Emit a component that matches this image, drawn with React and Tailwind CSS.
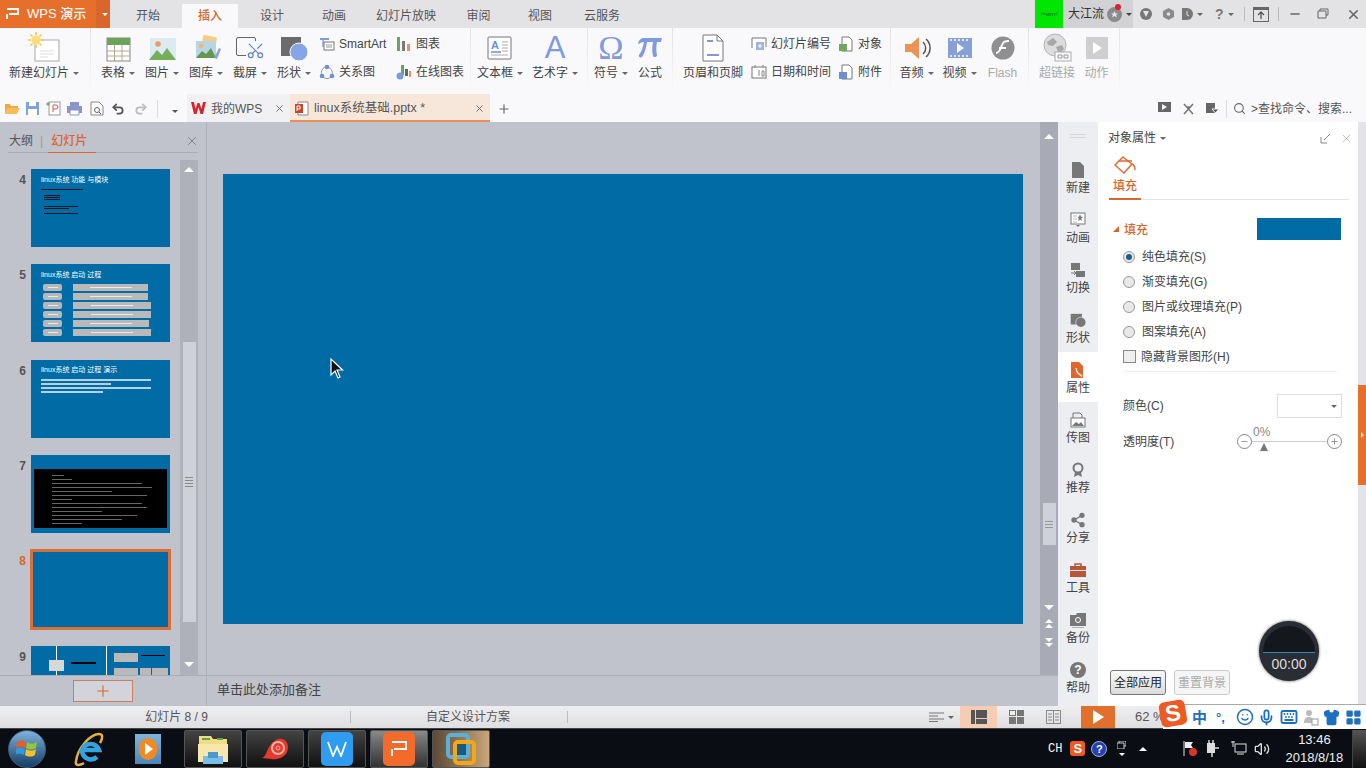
import React from "react";
import { Scissors, Search, Plus, X, Minus, Share2, Undo2, Redo2, Smile, Mic, Keyboard, Shirt, LayoutGrid, Volume2 } from "lucide-react";

const FONT = "font-['Liberation_Sans','Noto_Sans_CJK_SC',sans-serif]";

const Caret = ({ color = "border-t-[#666]" }) => (
  <span className={`inline-block ml-[4px] w-0 h-0 border-x-[3px] border-x-transparent border-t-[3px] ${color}`} />
);

const Sep = () => <div className="w-px h-[66px] bg-gradient-to-b from-[#e2e3e6] to-[#f9f9fb] shrink-0" />;
const Gap = ({ w }) => <div className={`${w} shrink-0`} />;

/* ---------- ribbon icons ---------- */
const NewSlideIcon = () => (
  <svg width="32" height="32" viewBox="0 0 32 32">
    <rect x="7" y="8" width="24" height="21" fill="#fff" stroke="#a9a9a9" />
    <path d="M12 19h14M12 22h14M12 25h8" stroke="#ddd" />
    <circle cx="8" cy="8" r="4.500" fill="#fbdc7a" />
    <path d="M8 0v3M8 13v3M0 8h3M13 8h3M2.500 2.500l2 2M11.500 11.500l2 2M13.500 2.500l-2 2M4.500 11.500l-2 2" stroke="#f0c644" strokeWidth="1.500" />
  </svg>
);
const TableIcon = () => (
  <svg width="32" height="32" viewBox="0 0 32 32">
    <rect x="5" y="6" width="23" height="23" fill="#fff" stroke="#888" />
    <rect x="5" y="6" width="23" height="7" fill="#6ca25a" />
    <path d="M5 19h23M5 24h23M12.500 13v16M20 13v16" stroke="#b9a48e" />
  </svg>
);
const PictureIcon = () => (
  <svg width="32" height="32" viewBox="0 0 32 32">
    <rect x="4" y="6" width="26" height="22" fill="#dceaf2" />
    <circle cx="12" cy="12" r="2.800" fill="#f09a56" />
    <path d="M3 28l8-10 5 5 5-7 9 12z" fill="#76ae5a" />
  </svg>
);
const GalleryIcon = () => (
  <svg width="32" height="32" viewBox="0 0 32 32">
    <rect x="12" y="4" width="14" height="14" rx="1" fill="#f2cf80" transform="rotate(10 19 11)" />
    <rect x="6" y="9" width="20" height="17" fill="#b8d5e8" />
    <circle cx="11" cy="14" r="2.200" fill="#f2b95e" />
    <path d="M6 26l6-7 4 3 5-6 5 10z" fill="#63984e" />
    <path d="M24 26l5-10 2 1-4 10z" fill="#8b9fd8" />
  </svg>
);
const ScreenshotIcon = () => (
  <div className="relative w-[32px] h-[32px]">
    <div className="absolute left-[2px] top-[5px] w-[20px] h-[19px] border border-[#666] rounded-[2px]" />
    <Scissors size={19} className="absolute left-[12px] top-[9px] text-[#5f82c9] rotate-[-90deg] bg-[#f9f9fb]" strokeWidth={1.500} />
  </div>
);
const ShapesIcon = ({ a = "#6b6b6b", b = "#86a5e6", s = 32 }) => (
  <svg width={s} height={s} viewBox="0 0 32 32">
    <path d="M3 5h20v19H3z" fill={a} />
    <circle cx="21" cy="20" r="9" fill={b} stroke="#f9f9fb" />
  </svg>
);
const TextBoxIcon = () => (
  <svg width="32" height="32" viewBox="0 0 32 32">
    <rect x="4" y="5" width="23" height="22" rx="1" fill="#fff" stroke="#777" />
    <text x="7" y="17" fontSize="11" fontWeight="700" fill="#6c8fd6" fontFamily="Liberation Sans">A</text>
    <path d="M7 20h10" stroke="#6c8fd6" strokeWidth="1.500" />
    <path d="M18 10h6M18 13h6M18 16h6M18 19h6M7 23h17" stroke="#aaa" />
  </svg>
);
const PiIcon = () => (
  <svg width="26" height="26" viewBox="0 0 26 26">
    <path d="M1 8c1-3 3-5 6-5h18l-1 4h-4c-1 5-1 9 0 13 .3 2-3 3-4 1-1-4-1-9 0-14h-6c-1 6-2 11-5 15-1 1-4 0-3-2 3-4 4-8 5-13-3 0-4 1-5 2z" fill="#7f9ae0" />
  </svg>
);
const PageFootIcon = () => (
  <svg width="32" height="32" viewBox="0 0 32 32">
    <path d="M6 3h14l6 6v20H6z" fill="#fff" stroke="#777" />
    <path d="M20 3v6h6" fill="none" stroke="#777" />
    <path d="M10 9h6M10 23h12" stroke="#7f9ad8" strokeWidth="2" />
  </svg>
);
const SpeakerIcon = () => (
  <svg width="32" height="32" viewBox="0 0 32 32">
    <path d="M4 12h6l8-7v22l-8-7H4z" fill="#ef9055" />
    <path d="M22 10a8 8 0 010 12M25 7a12 12 0 010 18" fill="none" stroke="#555" strokeWidth="1.500" />
  </svg>
);
const VideoIcon = () => (
  <svg width="32" height="32" viewBox="0 0 32 32">
    <rect x="4" y="6" width="24" height="20" fill="#86a0d8" />
    <path d="M6 8h2M10 8h2M14 8h2M18 8h2M22 8h2M6 24h2M10 24h2M14 24h2M18 24h2M22 24h2" stroke="#fff" strokeWidth="1.500" />
    <path d="M13 11l7 5-7 5z" fill="#fff" />
  </svg>
);
const FlashIcon = () => (
  <svg width="32" height="32" viewBox="0 0 32 32">
    <circle cx="16" cy="16" r="11.500" fill="#8f8f8f" />
    <path d="M9 21c5 0 5-9 8-11 1-.7 3-1 5-1M12 16h7" fill="none" stroke="#fff" strokeWidth="2" />
  </svg>
);
const LinkIcon = () => (
  <svg width="32" height="32" viewBox="0 0 32 32">
    <circle cx="14" cy="13" r="11" fill="#dcdcdc" stroke="#b5b5b5" />
    <path d="M6 10l6-4 4 4-4 4-5-1zM15 15l6-2 2 4-5 5z" fill="#a8a8a8" />
    <rect x="14" y="20" width="16" height="9" fill="#f9f9fb" stroke="#aaa" />
    <path d="M17 23h4v3h-4zM23 23h4v3h-4z" fill="none" stroke="#999" />
  </svg>
);
const ActionIcon = () => (
  <svg width="32" height="32" viewBox="0 0 32 32">
    <rect x="5" y="5" width="22" height="22" fill="#cfcfcf" />
    <path d="M12 10l9 6-9 6z" fill="#fff" />
  </svg>
);

const MiniPage = ({ fill = "#fff" }) => (
  <svg width="16" height="16" viewBox="0 0 16 16">
    <path d="M4 1h7l3 3v11H4z" fill="#fff" stroke="#777" />
    <rect x="1" y="8" width="8" height="7" fill={fill} />
  </svg>
);

const smallIcons = {
  smartart: (
    <svg width="16" height="16" viewBox="0 0 16 16">
      <path d="M1 2h9v2H1z" fill="#7f9ad8" />
      <path d="M3 4h2v7H3z" fill="#a7bce6" />
      <rect x="5" y="6" width="10" height="8" fill="#fff" stroke="#777" />
      <path d="M7 9h6M7 11h6" stroke="#999" />
    </svg>
  ),
  chart: (
    <svg width="16" height="16" viewBox="0 0 16 16">
      <path d="M1 1h3v14H1z" fill="#6ca25a" />
      <path d="M6 5h3v10H6z" fill="#7a7a7a" />
      <path d="M11 8h3v7h-3z" fill="#ef9055" />
    </svg>
  ),
  relation: (
    <svg width="16" height="16" viewBox="0 0 16 16">
      <path d="M8 3a6 6 0 015 8M3 11a6 6 0 013-8M12 13a6 6 0 01-8 0" fill="none" stroke="#999" />
      <circle cx="8" cy="3" r="2.300" fill="#6c8fd6" />
      <circle cx="3" cy="12" r="2.300" fill="#6c8fd6" />
      <circle cx="13" cy="12" r="2.300" fill="#6c8fd6" />
    </svg>
  ),
  online: (
    <svg width="16" height="16" viewBox="0 0 16 16">
      <path d="M5 1h3v10H5z" fill="#6ca25a" />
      <path d="M9 5h3v7H9z" fill="#666" />
      <path d="M13 7h2v6h-2z" fill="#ef9055" />
      <circle cx="4" cy="12" r="3.500" fill="#7f9ad8" />
    </svg>
  ),
  number: (
    <svg width="16" height="16" viewBox="0 0 16 16">
      <path d="M1 12V2h14v9" fill="#fff" stroke="#777" />
      <rect x="5" y="6" width="8" height="8" fill="#9fb4e2" />
      <path d="M7 10h4M9 8v4" stroke="#fff" />
    </svg>
  ),
  date: (
    <svg width="16" height="16" viewBox="0 0 16 16">
      <rect x="1" y="3" width="14" height="11" fill="#fff" stroke="#777" />
      <path d="M4 1v3M12 1v3M8 6v6M11 7h2v5h-2z" fill="none" stroke="#888" />
    </svg>
  ),
  object: <MiniPage fill="#6fa85e" />,
  attach: <MiniPage fill="#6c8fd6" />,
};

const BigBtn = ({ w, icon, label, caret, dim }) => (
  <div className={`flex flex-col items-center shrink-0 ${w}`}>
    <div className="h-[32px] mt-[4px] flex items-center justify-center">{icon}</div>
    <div className={`mt-px flex items-center whitespace-nowrap text-[12px] leading-[16px] ${dim ? "text-[#a9a9a9]" : "text-[#444]"}`}>
      {label}
      {caret && <Caret />}
    </div>
  </div>
);

const SmallCol = ({ w, items }) => (
  <div className={`flex flex-col shrink-0 gap-[9px] pt-[6px] ${w}`}>
    {items.map((it) => (
      <div key={it.label} className="flex items-center gap-[4px] h-[19px] text-[12px] text-[#444] whitespace-nowrap">
        {smallIcons[it.icon]}
        <span>{it.label}</span>
      </div>
    ))}
  </div>
);

const Ribbon = () => (
  <div className="flex h-[66px] bg-[#f9f9fb]">
    <BigBtn w="w-[90px] pr-[2px]" icon={<NewSlideIcon />} label="新建幻灯片" caret />
    <Sep />
    <Gap w="w-[5px]" />
    <BigBtn w="w-[44px]" icon={<TableIcon />} label="表格" caret />
    <BigBtn w="w-[44px]" icon={<PictureIcon />} label="图片" caret />
    <BigBtn w="w-[44px]" icon={<GalleryIcon />} label="图库" caret />
    <BigBtn w="w-[44px]" icon={<ScreenshotIcon />} label="截屏" caret />
    <BigBtn w="w-[44px]" icon={<ShapesIcon />} label="形状" caret />
    <Gap w="w-[3px]" />
    <SmallCol w="w-[77px]" items={[{ icon: "smartart", label: "SmartArt" }, { icon: "relation", label: "关系图" }]} />
    <SmallCol w="w-[74px]" items={[{ icon: "chart", label: "图表" }, { icon: "online", label: "在线图表" }]} />
    <Sep />
    <Gap w="w-[2px]" />
    <BigBtn w="w-[54px]" icon={<TextBoxIcon />} label="文本框" caret />
    <BigBtn w="w-[56px]" icon={<span className="text-[31px] leading-[32px] text-[#7f9ae0] font-['Liberation_Sans']">A</span>} label="艺术字" caret />
    <Gap w="w-[4px]" />
    <Sep />
    <BigBtn w="w-[46px]" icon={<span className="text-[34px] leading-[32px] text-[#7f9ae0] font-['Liberation_Serif']">Ω</span>} label="符号" caret />
    <Gap w="w-[4px]" />
    <BigBtn w="w-[24px]" icon={<PiIcon />} label="公式" />
    <Gap w="w-[10px]" />
    <Sep />
    <Gap w="w-[6px]" />
    <BigBtn w="w-[68px]" icon={<PageFootIcon />} label="页眉和页脚" />
    <Gap w="w-[4px]" />
    <SmallCol w="w-[87px]" items={[{ icon: "number", label: "幻灯片编号" }, { icon: "date", label: "日期和时间" }]} />
    <SmallCol w="w-[52px]" items={[{ icon: "object", label: "对象" }, { icon: "attach", label: "附件" }]} />
    <Sep />
    <Gap w="w-[4px]" />
    <BigBtn w="w-[43px]" icon={<SpeakerIcon />} label="音频" caret />
    <BigBtn w="w-[43px]" icon={<VideoIcon />} label="视频" caret />
    <BigBtn w="w-[43px]" icon={<FlashIcon />} label="Flash" dim />
    <Gap w="w-[4px]" />
    <Sep />
    <Gap w="w-[7px]" />
    <BigBtn w="w-[42px]" icon={<LinkIcon />} label="超链接" dim />
    <BigBtn w="w-[37px]" icon={<ActionIcon />} label="动作" dim />
    <Gap w="w-[4px]" />
    <Sep />
  </div>
);

const tabs = [
  { t: "开始", w: "w-[72px] pl-[4px]" },
  { t: "插入", w: "w-[56px]", active: true },
  { t: "设计", w: "w-[68px]" },
  { t: "动画", w: "w-[56px]" },
  { t: "幻灯片放映", w: "w-[88px]" },
  { t: "审阅", w: "w-[57px]" },
  { t: "视图", w: "w-[66px]" },
  { t: "云服务", w: "w-[58px]" },
];

const TitleBar = () => (
  <div className="flex h-[28px] bg-[#e3e3e5] items-stretch">
    <div className="flex w-[110px] bg-[#e56f2b] text-white text-[13px] font-medium shrink-0">
      <div className="flex items-center w-[96px] pl-[6px] gap-[7px]">
        <svg width="14" height="12" viewBox="0 0 14 12"><path d="M1 1h11v5H3M1 6v5" fill="none" stroke="#fff" strokeWidth="1.800" /></svg>
        <span className="whitespace-nowrap">WPS 演示</span>
      </div>
      <div className="flex-1 bg-[#d9662a] flex items-center justify-center"><Caret color="border-t-white" /></div>
    </div>
    {tabs.map((t) => (
      <div
        key={t.t}
        className={`${t.w} h-[24px] mt-[4px] flex items-center justify-center text-[12px] shrink-0 ${t.active ? "bg-[#f9f9fb] text-[#d9662a] font-medium" : "text-[#555]"}`}
      >
        {t.t}
      </div>
    ))}
    <div className="flex-1" />
    <div className="w-[28px] bg-[#00e600] shrink-0 flex items-center justify-center text-[6px] italic text-[#063]">f=wm²</div>
    <div className="w-[70px] bg-[#d2d2d4] flex items-center pl-[5px] text-[12px] text-[#333] shrink-0 relative">
      大江流
      <svg className="ml-[3px]" width="15" height="15" viewBox="0 0 15 15"><circle cx="7.500" cy="7.500" r="7.500" fill="#8a8a8a" /><path d="M7.500 4l1 2.500h2.500l-2 1.500 1 2.500-2.500-1.500L5 10.500l1-2.500-2-1.500h2.500z" fill="#e8e8e8" /></svg>
      <div className="absolute left-[52px] top-[4px] w-[6px] h-[6px] rounded-full bg-[#d9222a]" />
      <Caret color="border-t-[#444]" />
    </div>
    <div className="w-[233px] flex items-center text-[#777] shrink-0">
      <svg className="ml-[7px]" width="12" height="12" viewBox="0 0 12 12"><circle cx="6" cy="6" r="6" fill="#777" /><path d="M3 3l3 6 3-6z" fill="#e3e3e5" /></svg>
      <svg className="ml-[11px]" width="11" height="12" viewBox="0 0 11 12"><path d="M5.500 0L11 3v6l-5.500 3L0 9V3z" fill="#8a8a8a" /><circle cx="5.500" cy="6" r="1.800" fill="#e3e3e5" /></svg>
      <svg className="ml-[8px]" width="11" height="12" viewBox="0 0 11 12"><path d="M0 0h5a6 6 0 010 12H0z" fill="#777" /><path d="M5 3v4l2 1" fill="none" stroke="#e3e3e5" /></svg>
      <Caret />
      <span className="ml-[12px] text-[14px] font-bold leading-none">?</span>
      <Caret />
      <div className="ml-[10px] w-px h-[14px] bg-[#bbb]" />
      <svg className="ml-[8px]" width="16" height="15" viewBox="0 0 16 15"><rect x=".5" y=".5" width="15" height="14" fill="none" stroke="#666" /><path d="M1 1h14v2H1z" fill="#666" /><path d="M8 12V6M5 8l3-3 3 3" fill="none" stroke="#555" strokeWidth="1.300" /></svg>
      <div className="ml-[9px] w-px h-[14px] bg-[#bbb]" />
      <Minus size={14} className="ml-[9px] text-[#666]" strokeWidth={2.500} />
      <svg className="ml-[15px]" width="12" height="12" viewBox="0 0 12 12"><path d="M3 3V1h8v6H9M1 3h8v7H1z" fill="none" stroke="#666" /></svg>
      <X size={15} className="ml-[17px] text-[#666]" strokeWidth={2.500} />
    </div>
  </div>
);

const TabBar = () => (
  <div className="flex items-stretch h-[28px] bg-[#f9f9fb] text-[12px] text-[#555]">
    <div className="flex items-center w-[187px] pl-[5px] pt-px shrink-0">
      <svg width="15" height="13" viewBox="0 0 15 13"><path d="M0 2h5l1 2h7v2H3L0 12z" fill="#f2a93c" /><path d="M3 6h12l-3 6H0z" fill="#f5bd5e" /></svg>
      <svg className="ml-[5px]" width="15" height="15" viewBox="0 0 15 15"><path d="M1 1h13v13H1z" fill="#7fa3e0" /><path d="M4 1h7v4H4zM3 8h9v6H3z" fill="#fff" /></svg>
      <svg className="ml-[6px]" width="15" height="15" viewBox="0 0 15 15"><rect x="3" y="1" width="11" height="13" fill="#fff" stroke="#999" /><path d="M7 11V4h3a2 2 0 010 4H7" fill="none" stroke="#d9555a" /><path d="M0 3h4M2 1v4" stroke="#5aa35a" /></svg>
      <svg className="ml-[6px]" width="15" height="15" viewBox="0 0 15 15"><path d="M3 1h9v4H3zM0 5h15v7H0z" fill="#8b95c9" /><path d="M3 9h9v5H3z" fill="#fff" stroke="#8b95c9" /></svg>
      <svg className="ml-[8px]" width="14" height="15" viewBox="0 0 14 15"><path d="M1 1h8l4 4v9H1z" fill="#fff" stroke="#888" /><circle cx="7" cy="9" r="2.500" fill="none" stroke="#666" /><path d="M9 11l2 2" stroke="#666" /></svg>
      <Undo2 size={14} className="ml-[7px] text-[#555]" strokeWidth={3} />
      <Redo2 size={14} className="ml-[9px] text-[#bbb]" strokeWidth={3} />
      <div className="ml-[9px] w-px h-[18px] bg-[#ddd]" />
      <span className="ml-[10px]"><Caret color="border-t-[#555]" /></span>
    </div>
    <div className="flex items-center w-[103px] bg-[#f1f1f3] pl-[4px] pt-px shrink-0">
      <svg className="mr-[5px]" width="15" height="13" viewBox="0 0 15 13"><path d="M0 0l3 12h2.500L7.500 5l2 7H12L15 0h-3l-1.500 7L8.500 1h-2L4.500 7 3 0z" fill="#d9222a" /></svg>
      我的WPS
      <X size={11} className="ml-auto mr-[5px] text-[#666]" />
    </div>
    <div className="flex items-center w-[200px] bg-[#f6e7da] border-b-2 border-[#e9905a] pl-[5px] pt-[3px] shrink-0">
      <svg width="14" height="15" viewBox="0 0 14 15"><path d="M3 1h10v13H3z" fill="#fff" stroke="#888" /><rect x="0" y="3" width="8" height="9" fill="#c8452d" /><path d="M2 10V5h3v3H2" fill="none" stroke="#fff" /></svg>
      <span className="ml-[5px] text-[12.500px]">linux系统基础.pptx *</span>
      <X size={11} className="ml-auto mr-[5px] text-[#666]" />
    </div>
    <div className="flex items-center ml-[7px] pt-px"><Plus size={14} className="text-[#666]" strokeWidth={2} /></div>
    <div className="flex-1" />
    <div className="flex items-center w-[208px] pt-px shrink-0 text-[#555]">
      <svg width="13" height="13" viewBox="0 0 13 13"><path d="M0 0h13v10H0z" fill="#666" /><path d="M4 2l5 3-5 3zM3 11h7v2H3z" fill="#f9f9fb" /></svg>
      <svg className="ml-[11px]" width="13" height="13" viewBox="0 0 13 13"><path d="M2 2l9 10M11 2L2 12M4 5h5" stroke="#777" strokeWidth="1.600" /></svg>
      <svg className="ml-[11px]" width="13" height="13" viewBox="0 0 13 13"><path d="M0 1h9v10H0z" fill="#666" /><path d="M6 7h7l-3.500 4z" fill="#555" stroke="#f9f9fb" /></svg>
      <div className="ml-[7px] w-px h-[18px] bg-[#ddd]" />
      <Search size={13} className="ml-[6px] text-[#666]" />
      <span className="ml-[5px] whitespace-nowrap">&gt;查找命令、搜索...</span>
    </div>
  </div>
);

/* ---------- slide thumbnails ---------- */
const TinyLines = ({ rows }) => (
  <div className="flex flex-col gap-[1px]">
    {rows.map((w, i) => (
      <div key={i} className="h-px bg-black/80" style={{ width: w }} />
    ))}
  </div>
);

const Slide4 = () => (
  <div className="px-[10px] pt-[6px]">
    <div className="text-[7px] leading-[9px] text-white whitespace-nowrap">linux系统 功能 与模块</div>
    <div className="mt-[5px]"><TinyLines rows={[42]} /></div>
    <div className="mt-[5px] ml-[3px]"><TinyLines rows={[16, 16, 16]} /></div>
    <div className="mt-[6px] ml-[3px]"><TinyLines rows={[34, 25]} /></div>
    <div className="mt-[4px] ml-[3px]"><TinyLines rows={[34]} /></div>
  </div>
);

const bars = [75, 75, 78, 78, 76, 78];
const Slide5 = () => (
  <div className="px-[10px] pt-[6px]">
    <div className="text-[7px] leading-[9px] text-white whitespace-nowrap">linux系统 启动 过程</div>
    <div className="flex flex-col gap-[2px] mt-[5px] ml-[2px]">
      {bars.map((w, i) => (
        <div key={i} className="flex h-[7px] gap-[11px]">
          <div className="w-[19px] bg-[#b5b7ba] rounded-[2px] flex items-center justify-center"><div className="w-[10px] h-px bg-white/70" /></div>
          <div className="bg-[#b9b9b9] flex items-center justify-center" style={{ width: w }}><div className="w-[42px] h-px bg-white/70" /></div>
        </div>
      ))}
    </div>
  </div>
);

const Slide6 = () => (
  <div className="px-[10px] pt-[5px]">
    <div className="text-[7px] leading-[9px] text-white whitespace-nowrap">linux系统 启动 过程 演示</div>
    <div className="mt-[5px] flex flex-col gap-[2px]">
      {[110, 70, 110, 62].map((w, i) => (
        <div key={i} className="h-[2px] bg-white/70" style={{ width: w }} />
      ))}
    </div>
  </div>
);

const Slide7 = () => (
  <div className="px-[3px] pt-[14px]">
    <div className="h-[59px] bg-black pl-[18px] pt-[6px] flex flex-col gap-[3px]">
      {[12, 20, 90, 100, 60, 95, 20, 90, 95, 50, 85, 70, 30].map((w, i) => (
        <div key={i} className="h-px bg-white/40" style={{ width: w }} />
      ))}
    </div>
  </div>
);

const Slide9 = () => (
  <div className="relative h-full">
    <div className="absolute left-[25px] top-0 w-px h-[29px] bg-white" />
    <div className="absolute left-[18px] top-[14px] w-[15px] h-[11px] bg-[#d8d8d8]" />
    <div className="absolute left-[40px] top-[16px] w-[25px] h-[2px] bg-black" />
    <div className="absolute left-[75px] top-0 w-px h-[29px] bg-white" />
    <div className="absolute left-[83px] top-[7px] w-[24px] h-[9px] bg-[#b9b9b9]" />
    <div className="absolute left-[83px] top-[22px] w-[24px] h-[7px] bg-[#b9b9b9]" />
    <div className="absolute left-[110px] top-[9px] w-[24px] h-px bg-black" />
    <div className="absolute left-[109px] top-[22px] w-[11px] h-[7px] bg-[#b9b9b9]" />
    <div className="absolute left-[121px] top-[22px] w-[16px] h-[7px] bg-[#b9b9b9]" />
  </div>
);

const thumbs = [
  { n: 4, body: <Slide4 /> },
  { n: 5, body: <Slide5 /> },
  { n: 6, body: <Slide6 />, nudge: true },
  { n: 7, body: <Slide7 /> },
  { n: 8, active: true },
  { n: 9, body: <Slide9 />, nudge: true },
];

const UpTri = () => <div className="w-0 h-0 border-x-[5px] border-x-transparent border-b-[5px] border-b-white" />;
const DownTri = () => <div className="w-0 h-0 border-x-[5px] border-x-transparent border-t-[5px] border-t-white" />;

const Grip = ({ n = 4, c = "bg-[#8a8a8a]" }) => (
  <div className="flex flex-col gap-[2px]">
    {Array.from({ length: n }).map((_, i) => (
      <div key={i} className={`w-[8px] h-px ${c}`} />
    ))}
  </div>
);

const LeftPanel = () => (
  <div className="w-[207px] shrink-0 border-r border-[#aeb0ba] flex flex-col">
    <div className="h-[31px] pt-[8px] mx-[8px] border-b border-[#a9abb5] flex items-center text-[12px] text-[#555] relative shrink-0">
      <span className="ml-px">大纲</span>
      <span className="ml-[7px] mr-[8px] text-[#999]">|</span>
      <span className="text-[#d9662a] font-medium">幻灯片</span>
      <div className="absolute left-[40px] bottom-[-1px] w-[48px] h-px bg-[#d9662a]" />
      <X size={14} strokeWidth={1} className="ml-auto mr-[-1px] text-[#555]" />
    </div>
    <div className="flex flex-1 min-h-0 pt-[7px]">
      <div className="w-[180px] overflow-hidden flex flex-col gap-[17px] pt-[9px] shrink-0 border-b border-[#a9abb5]">
        {thumbs.map((s) => (
          <div key={s.n} className={`flex shrink-0 ${s.nudge ? "mt-px" : ""}`}>
            <div className={`w-[31px] pr-[5px] pt-[4px] text-right text-[12px] leading-[14px] font-bold ${s.active ? "text-[#d9662a]" : "text-[#555]"}`}>{s.n}</div>
            {s.active ? (
              <div className="w-[141px] h-[81px] -ml-px -mt-px -mb-[2px] bg-[#006ba4] border-[3px] border-[#d9703a]" />
            ) : (
              <div className="w-[139px] h-[78px] bg-[#006ba4] overflow-hidden">{s.body}</div>
            )}
          </div>
        ))}
      </div>
      <div className="w-[18px] shrink-0 bg-[#aeb0ba] flex flex-col items-center border-b border-[#a9abb5]">
        <div className="mt-[7px]"><UpTri /></div>
        <div className="mt-[170px] w-[13px] h-[280px] bg-[#cfd1da] flex items-center justify-center"><Grip /></div>
        <div className="mt-[40px]"><DownTri /></div>
      </div>
      <div className="w-[8px] shrink-0 border-b border-[#a9abb5]" />
    </div>
    <div className="h-[30px] shrink-0 flex justify-center">
      <div className="mt-[4px] w-[60px] h-[22px] border border-[#c8815a] bg-[#d3d4db] flex items-center justify-center">
        <Plus size={18} className="text-[#d9662a]" strokeWidth={1.500} />
      </div>
    </div>
  </div>
);

const DoubleTri = ({ up }) => (
  <svg width="10" height="10" viewBox="0 0 10 10" className={up ? "" : "rotate-180"}>
    <path d="M5 0l4 4H1zM5 5l4 4H1z" fill="#fff" />
  </svg>
);

const CenterArea = () => (
  <div className="flex-1 min-w-0 flex flex-col">
    <div className="flex flex-1 min-h-0">
      <div className="flex-1 pl-[16px] pt-[52px]">
        <div className="w-[800px] h-[450px] bg-[#006ba4]" />
      </div>
      <div className="w-[18px] shrink-0 bg-[#a8aab6] flex flex-col items-center">
        <div className="mt-[12px]"><UpTri /></div>
        <div className="mt-[364px] w-[13px] h-[42px] bg-[#cfd1da] flex items-center justify-center"><Grip n={3} c="bg-[#999]" /></div>
        <div className="mt-[60px]"><DownTri /></div>
        <div className="mt-[9px]"><DoubleTri up /></div>
        <div className="mt-[8px]"><DoubleTri /></div>
      </div>
    </div>
    <div className="h-[31px] pb-[2px] border-t border-[#aeb0ba] flex items-center pl-[10px] text-[13px] text-[#444] shrink-0">单击此处添加备注</div>
  </div>
);

/* ---------- right side ---------- */
const g = "#777";
const side = [
  { t: "新建", i: <svg width="14" height="16" viewBox="0 0 14 16"><path d="M1 0h8l4 4v12H1z" fill={g} /></svg> },
  { t: "动画", i: <svg width="16" height="16" viewBox="0 0 16 16"><rect x="1" y="1" width="14" height="11" fill="#fff" stroke={g} /><path d="M3 4h4M3 7h4M3 10h4M10 3l1 2h1.500L11 6.500l.5 2L10 7.500 8.500 8.500 9 6.500 8 5h1z" stroke={g} fill={g} strokeWidth=".5" /><path d="M6 13h4l-2 2z" fill={g} /></svg> },
  { t: "切换", i: <svg width="16" height="16" viewBox="0 0 16 16"><path d="M1 1h9v7H1zM6 9h9v6H6z" fill={g} /><path d="M1 11h5M4 9l2 2-2 2" stroke={g} fill="none" /></svg> },
  { t: "形状", i: <ShapesIcon a={g} b={g} s={18} /> },
  { t: "属性", active: true, i: <svg width="16" height="16" viewBox="0 0 16 16"><path d="M1 0h8l4 4v12H1z" fill="#e0672a" /><path d="M5 6h2l1 4 5 4-1.500 1-5-4z" fill="#fff" stroke="#e0672a" strokeWidth=".5" /></svg> },
  { t: "传图", i: <svg width="16" height="16" viewBox="0 0 16 16"><path d="M3 6V1h7l2 2v3" fill="none" stroke={g} /><rect x="1" y="6" width="14" height="9" fill="#fff" stroke={g} /><path d="M2 14l4-4 3 2 2-2 3 4z" fill={g} /></svg> },
  { t: "推荐", i: <svg width="14" height="16" viewBox="0 0 14 16"><circle cx="7" cy="6" r="4.500" fill="none" stroke={g} strokeWidth="2" /><path d="M4 10l-1 5 4-2 4 2-1-5" fill={g} /></svg> },
  { t: "分享", i: <Share2 size={16} fill={g} className="text-[#777]" strokeWidth={2} /> },
  { t: "工具", i: <svg width="16" height="14" viewBox="0 0 16 14"><path d="M5 3V1h6v2" fill="none" stroke="#b8563a" strokeWidth="1.500" /><path d="M0 3h16v4H0zM0 8h16v6H0z" fill="#b8563a" /></svg> },
  { t: "备份", i: <svg width="16" height="15" viewBox="0 0 16 15"><path d="M0 2h6l1-2h9v13H0z" fill={g} /><circle cx="8" cy="7" r="2.500" fill="none" stroke="#fff" /><path d="M2 15h12" stroke={g} /></svg> },
  { t: "帮助", i: <div className="w-[16px] h-[16px] rounded-full bg-[#777] text-white text-[12px] font-bold leading-[16px] text-center">?</div> },
];

const SideBar = () => (
  <div className="w-[40px] shrink-0 bg-[#eceef2] flex flex-col items-center">
    <div className="h-[30px] w-full flex flex-col items-center justify-end pb-[14px] gap-[2px] shrink-0">
      <div className="w-[16px] h-px bg-[#d5d5d5]" />
      <div className="w-[16px] h-px bg-[#d5d5d5]" />
    </div>
    {side.map((s) => (
      <div key={s.t} className={`w-full h-[50px] flex flex-col items-center shrink-0 ${s.active ? "bg-white" : ""}`}>
        <div className="h-[20px] mt-[8px] flex items-center justify-center">{s.i}</div>
        <div className="mt-px text-[12px] leading-[14px] text-[#444]">{s.t}</div>
      </div>
    ))}
  </div>
);

const Radio = ({ on, label }) => (
  <div className="flex items-center h-[25px] text-[12px] text-[#444]">
    <div className="w-[12px] h-[12px] rounded-full border border-[#999] bg-[#e8e8e8] flex items-center justify-center mr-[7px]">
      {on && <div className="w-[6px] h-[6px] rounded-full bg-[#1d5f87]" />}
    </div>
    {label}
  </div>
);

const PropsPanel = () => (
  <div className="flex-1 bg-white flex flex-col pl-[12px] pr-[8px] text-[12px] text-[#444]">
    <div className="flex items-center h-[30px] mt-[1px] -ml-[2px] -mr-[3px] shrink-0">
      对象属性<Caret />
      <svg className="ml-auto" width="11" height="11" viewBox="0 0 11 11"><path d="M10 1L4 7M1 10V4M1 10h6" fill="none" stroke="#888" /></svg>
      <X size={13} strokeWidth={1} className="ml-[9px] text-[#888]" />
    </div>
    <div className="border-b border-[#e2e2e2] h-[47px] w-[240px] relative shrink-0 -ml-[1px]">
      <svg className="ml-[4px] mt-[2px]" width="24" height="20" viewBox="0 0 24 20"><path d="M10 2l9 7-8 9-9-8z" fill="none" stroke="#e0672a" strokeWidth="1.400" /><path d="M6 6h13M19 9c2 1 3 3 3 6" fill="none" stroke="#e0672a" strokeWidth="1.400" /></svg>
      <div className="mt-[2px] ml-[4px] text-[#d9662a] font-medium">填充</div>
      <div className="absolute left-0 bottom-[-1px] w-[32px] h-[2px] bg-[#d9662a]" />
    </div>
    <div className="flex items-center h-[22px] mt-[18px] w-[231px] shrink-0">
      <div className="ml-[3px] w-0 h-0 border-b-[6px] border-b-[#d9662a] border-l-[6px] border-l-transparent mr-[5px]" />
      <span className="text-[#d9662a] font-medium pt-[1px]">填充</span>
      <div className="ml-auto w-[84px] h-[22px] bg-[#006ba4]" />
    </div>
    <div className="mt-[4px] ml-[13px] shrink-0">
      <Radio on label="纯色填充(S)" />
      <Radio label="渐变填充(G)" />
      <Radio label="图片或纹理填充(P)" />
      <Radio label="图案填充(A)" />
      <div className="flex items-center h-[25px]">
        <div className="w-[13px] h-[13px] border border-[#888] bg-[#eee] mr-[5px]" />隐藏背景图形(H)
      </div>
    </div>
    <div className="ml-[14px] w-[213px] border-t border-[#eee] mt-[2px] shrink-0" />
    <div className="flex items-center h-[24px] mt-[22px] ml-[13px] w-[219px] shrink-0">
      颜色(C)
      <div className="ml-auto w-[65px] h-[24px] border border-[#ddd] flex items-center justify-end pr-[4px]"><Caret /></div>
    </div>
    <div className="flex items-center h-[24px] mt-[12px] ml-[13px] w-[219px] shrink-0">
      透明度(T)
      <div className="ml-auto w-[105px] flex items-center relative -top-px">
        <div className="w-[15px] h-[15px] rounded-full border border-[#888] flex items-center justify-center"><Minus size={9} className="text-[#777]" /></div>
        <div className="flex-1 h-px bg-[#ccc]" />
        <div className="w-[15px] h-[15px] rounded-full border border-[#888] flex items-center justify-center"><Plus size={9} className="text-[#777]" /></div>
        <span className="absolute left-[16px] top-[-9px] text-[12px] leading-[14px] text-[#888]">0%</span>
        <div className="absolute left-[23px] top-[9px] w-0 h-0 border-x-[4px] border-x-transparent border-b-[8px] border-b-[#777]" />
      </div>
    </div>
    <div className="flex-1" />
    <div className="flex gap-[8px] mb-[11px] shrink-0">
      <div className="w-[56px] h-[25px] border border-[#777] rounded-[3px] bg-gradient-to-b from-[#f8f8f8] to-[#dcdcdc] flex items-center justify-center text-[#222]">全部应用</div>
      <div className="w-[56px] h-[25px] border border-[#ccc] rounded-[3px] bg-[#f5f5f5] flex items-center justify-center text-[#aaa]">重置背景</div>
    </div>
  </div>
);

const EdgeStrip = () => (
  <div className="w-[8px] shrink-0 bg-[#e3e4e9] flex flex-col">
    <div className="mt-[263px] h-[100px] bg-[#e56f2b] flex items-center justify-center">
      <div className="w-0 h-0 border-y-[3px] border-y-transparent border-l-[3px] border-l-[#f8e0c8]" />
    </div>
  </div>
);

const StatusBar = () => (
  <div className="flex items-center h-[22px] bg-gradient-to-b from-[#eeeef0] to-[#dfdfe2] text-[12px] text-[#555]">
    <div className="w-[351px] text-center pl-[3px] border-r border-[#bbb] h-[12px] leading-[12px]">幻灯片 8 / 9</div>
    <div className="w-[217px] text-center pl-[18px] border-r border-[#bbb] h-[12px] leading-[12px]">自定义设计方案</div>
    <div className="flex-1" />
    <div className="flex items-stretch h-[22px] w-[437px] shrink-0">
      <div className="flex items-center w-[31px]">
        <svg width="15" height="10" viewBox="0 0 15 10"><path d="M0 1h15M0 4h9M0 7h15M0 9.500h9" stroke="#777" /></svg>
        <Caret />
      </div>
      <div className="w-[37px] bg-[#f6cdb4] flex items-center justify-center">
        <svg width="16" height="14" viewBox="0 0 16 14"><path d="M0 0h4v14H0zM5 9h11v5H5z" fill="#555" /><path d="M5 0h11v8H5z" fill="#555" /></svg>
      </div>
      <div className="w-[38px] flex items-center justify-center">
        <svg width="15" height="14" viewBox="0 0 15 14"><path d="M0 0h7v6H0zM0 7h7v7H0zM8 0h7v6H8zM8 7h7v7H8z" fill="#777" /><path d="M1 1h5v4H1z" fill="#eee" /></svg>
      </div>
      <div className="w-[36px] flex items-center justify-center">
        <svg width="15" height="14" viewBox="0 0 15 14"><rect x=".5" y=".5" width="14" height="13" fill="none" stroke="#888" /><path d="M7.500 0v14M2 4h4M2 7h4M2 10h4M9 4h4M9 7h4M9 10h4" stroke="#888" /></svg>
      </div>
      <div className="w-[34px] ml-[10px] bg-[#e0702c] flex items-center justify-center">
        <div className="w-0 h-0 border-y-[7px] border-y-transparent border-l-[11px] border-l-white" />
      </div>
      <div className="ml-[20px] flex items-center text-[13px] whitespace-nowrap">62 %</div>
    </div>
  </div>
);

const ImeBar = () => (
  <div className="absolute left-[1163px] top-[704px] w-[203px] h-[25px] bg-white border-t border-[#aaa] flex items-center">
    <div className="absolute left-[-3px] top-[-4px] w-[26px] h-[25px] bg-[#ef5a24] rounded-[5px] rotate-[-10deg] flex items-center justify-center text-white font-bold text-[23px] leading-none">S</div>
    <span className="ml-[29px] text-[#1f6fc0] font-bold text-[15px] leading-none">中</span>
    <span className="ml-[9px] text-[#1f6fc0] font-bold text-[13px] leading-none">°,</span>
    <Smile size={18} className="ml-[11px] text-[#1f6fc0]" strokeWidth={2} />
    <Mic size={17} className="ml-[4px] text-[#1f6fc0]" strokeWidth={2.500} />
    <Keyboard size={18} className="ml-[5px] text-[#1f6fc0]" strokeWidth={2.500} />
    <svg className="ml-[5px]" width="16" height="17" viewBox="0 0 16 17"><circle cx="6" cy="4" r="3" fill="#bbb" /><path d="M1 14c0-4 2-6 5-6s5 2 5 6z" fill="#bbb" /><rect x="9" y="10" width="6" height="6" fill="#fff" stroke="#999" /></svg>
    <Shirt size={17} fill="#1f6fc0" className="ml-[4px] text-[#1f6fc0]" />
    <LayoutGrid size={17} fill="#1f6fc0" className="ml-[5px] text-[#1f6fc0]" />
  </div>
);

/* ---------- taskbar ---------- */
const TaskBtn = ({ children, active, ml }) => (
  <div className={`h-[38px] ${ml} w-[58px] rounded-[2px] border border-[#555] flex items-center justify-center shrink-0 ${active === "wood" ? "bg-gradient-to-r from-[#5b4a36] to-[#caa678]" : active === "light" ? "bg-gradient-to-b from-[#8a8a8a] to-[#333]" : "bg-gradient-to-b from-[#444] to-[#111]"}`}>
    {children}
  </div>
);

const TaskBar = () => (
  <div className="flex items-center h-[40px] bg-[#0a0e14] border-t border-[#444] text-white">
    <div className="ml-[8px] w-[38px] h-[38px] rounded-full bg-gradient-to-b from-[#7fb4dc] to-[#173f66] border border-[#3d5f80] flex items-center justify-center shrink-0">
      <svg width="22" height="20" viewBox="0 0 22 20"><path d="M1 3c3-2 6-2 9 0l-1 6c-3-2-6-2-9 0z" fill="#ea5a2a" /><path d="M11 3c3 2 6 2 10 0l-1 6c-3 2-7 2-10 0z" fill="#8ec63f" /><path d="M0 10c3-2 6-2 9 0l-1 6c-3-2-6-2-9 0z" fill="#2e9bdc" /><path d="M10 10c3 2 7 2 10 0l-1 6c-3 2-7 2-10 0z" fill="#f4c22e" /></svg>
    </div>
    <svg className="ml-[27px] shrink-0" width="32" height="36" viewBox="0 0 32 36">
      <path d="M26 3C18 3 5 16 3 30c-1 5 3 5 8 2" fill="none" stroke="#e3b23c" strokeWidth="2.500" />
      <path d="M26 3c4 0 4 4 1 9" fill="none" stroke="#e3b23c" strokeWidth="2.500" />
      <path d="M9 19h17a9 9 0 00-17 0zM9 19a9 9 0 0015 7" fill="none" stroke="#35a3e0" strokeWidth="4.500" />
    </svg>
    <div className="ml-[30px] w-[26px] h-[30px] bg-gradient-to-b from-[#7eb6de] to-[#4a86b8] flex items-center justify-center shrink-0">
      <div className="w-[18px] h-[22px] bg-[#f08a24] rounded-full flex items-center justify-center"><div className="ml-[2px] w-0 h-0 border-y-[6px] border-y-transparent border-l-[8px] border-l-white" /></div>
    </div>
    <TaskBtn ml="ml-[23px]">
      <svg width="32" height="30" viewBox="0 0 32 30"><path d="M2 2h12l2 3h14v8H2z" fill="#f4dc82" /><path d="M5 5h8M20 5h6" stroke="#5aa35a" strokeWidth="2" /><path d="M1 10h30v18H1z" fill="#f6e7ac" /><path d="M6 22h20v8H6z" fill="#7bbde4" /><path d="M11 18h10v6H11z" fill="#4d97cf" /></svg>
    </TaskBtn>
    <TaskBtn ml="ml-[4px]">
      <svg width="30" height="26" viewBox="0 0 30 26"><path d="M2 22C8 20 6 8 18 3c8-2 12 6 9 13-3 6-10 8-16 7z" fill="#e23a30" /><circle cx="18" cy="12" r="6" fill="none" stroke="#f9b0a0" strokeWidth="2" /><circle cx="18" cy="12" r="2" fill="none" stroke="#f9b0a0" /></svg>
    </TaskBtn>
    <TaskBtn ml="ml-[4px]">
      <div className="w-[32px] h-[34px] rounded-[5px] bg-[#2f9cf0] flex items-center justify-center">
        <svg width="22" height="16" viewBox="0 0 22 16"><path d="M2 1l5 14 4-9 4 9 5-14" fill="none" stroke="#fff" strokeWidth="1.800" /></svg>
      </div>
    </TaskBtn>
    <TaskBtn ml="ml-[4px]" active="light">
      <div className="w-[32px] h-[34px] rounded-[5px] bg-[#f26b2a] flex items-center justify-center">
        <svg width="18" height="16" viewBox="0 0 18 16"><path d="M2 1h14v7H4M2 8v7" fill="none" stroke="#fff" strokeWidth="1.800" /></svg>
      </div>
    </TaskBtn>
    <TaskBtn ml="ml-[4px]" active="wood">
      <svg width="30" height="32" viewBox="0 0 30 32"><rect x="2" y="2" width="20" height="22" rx="3" fill="none" stroke="#5bb0d8" strokeWidth="4" /><rect x="9" y="9" width="19" height="21" rx="3" fill="none" stroke="#f0a818" strokeWidth="4" /><rect x="11" y="11" width="9" height="11" fill="#1a5a80" /></svg>
    </TaskBtn>
    <div className="flex-1" />
    <div className="flex items-center w-[318px] shrink-0 text-[12px]">
      <span className="font-['Liberation_Mono'] text-[12px]">CH</span>
      <div className="ml-[8px] w-[15px] h-[15px] rounded-[3px] bg-[#ef5a24] text-white font-bold text-[13px] leading-[15px] text-center">S</div>
      <div className="ml-[6px] w-[16px] h-[16px] rounded-full bg-[#2a3fae] border border-[#9bb0e8] text-white font-bold text-[11px] leading-[14px] text-center">?</div>
      <div className="ml-[10px] flex flex-col items-center gap-[4px]">
        <svg width="9" height="8" viewBox="0 0 9 8"><path d="M2 2V0h7v5H7M0 2h7v6H0z" fill="none" stroke="#ccc" /></svg>
        <div className="w-0 h-0 border-x-[3px] border-x-transparent border-t-[3px] border-t-white" />
      </div>
      <div className="ml-[13px] w-0 h-0 border-x-[4px] border-x-transparent border-b-[4px] border-b-white" />
      <svg className="ml-[35px]" width="16" height="17" viewBox="0 0 16 17"><path d="M2 1v15" stroke="#ddd" /><path d="M3 2h8l-2 3 2 3H3z" fill="#eee" /><circle cx="11" cy="12" r="4" fill="#d9342a" /></svg>
      <svg className="ml-[8px]" width="14" height="17" viewBox="0 0 14 17"><rect x="1" y="3" width="8" height="10" fill="#ddd" /><path d="M3 0v3M7 0v3M9 8h4M6 13v4" stroke="#ddd" strokeWidth="1.500" /></svg>
      <svg className="ml-[11px]" width="16" height="15" viewBox="0 0 16 15"><rect x="4" y="3" width="11" height="8" fill="none" stroke="#ddd" /><path d="M2 0v6M0 1h4M6 13h7" stroke="#ddd" /></svg>
      <Volume2 size={16} className="ml-[7px] text-[#ddd]" />
      <div className="ml-[10px] w-[68px] text-center text-[13px] leading-[18px] text-[#eee]">
        <div>13:46</div>
        <div>2018/8/18</div>
      </div>
      <div className="ml-auto w-[14px] h-[38px] bg-gradient-to-b from-[#555] to-[#111] border-l border-[#444]" />
    </div>
  </div>
);

const Cursor = () => (
  <svg className="absolute left-[330px] top-[358px]" width="14" height="21" viewBox="0 0 14 21">
    <path d="M1 1v16l4-4 3 7 2-1-3-7h5.500z" fill="#111" stroke="#fff" strokeWidth="1.200" />
  </svg>
);

const Recorder = () => (
  <div className="absolute left-[1259px] top-[621px] w-[60px] h-[60px] rounded-full bg-[#2a2d33] shadow-[0_0_3px_#555] flex flex-col items-center overflow-hidden">
    <div className="mt-[5px] w-[52px] h-[27px] rounded-t-full bg-[#14171c] border-b border-[#2f86c0]" />
    <div className="mt-[3px] text-[14px] leading-[16px] text-[#ddd]">00:00</div>
  </div>
);

export default function App() {
  return (
    <div className={`relative w-[1366px] h-[768px] overflow-hidden flex flex-col bg-[#c0c2cc] ${FONT}`}>
      <TitleBar />
      <Ribbon />
      <TabBar />
      <div className="flex flex-1 min-h-0">
        <LeftPanel />
        <CenterArea />
        <div className="w-[308px] shrink-0 flex">
          <SideBar />
          <PropsPanel />
          <EdgeStrip />
        </div>
      </div>
      <StatusBar />
      <TaskBar />
      <ImeBar />
      <Cursor />
      <Recorder />
    </div>
  );
}
